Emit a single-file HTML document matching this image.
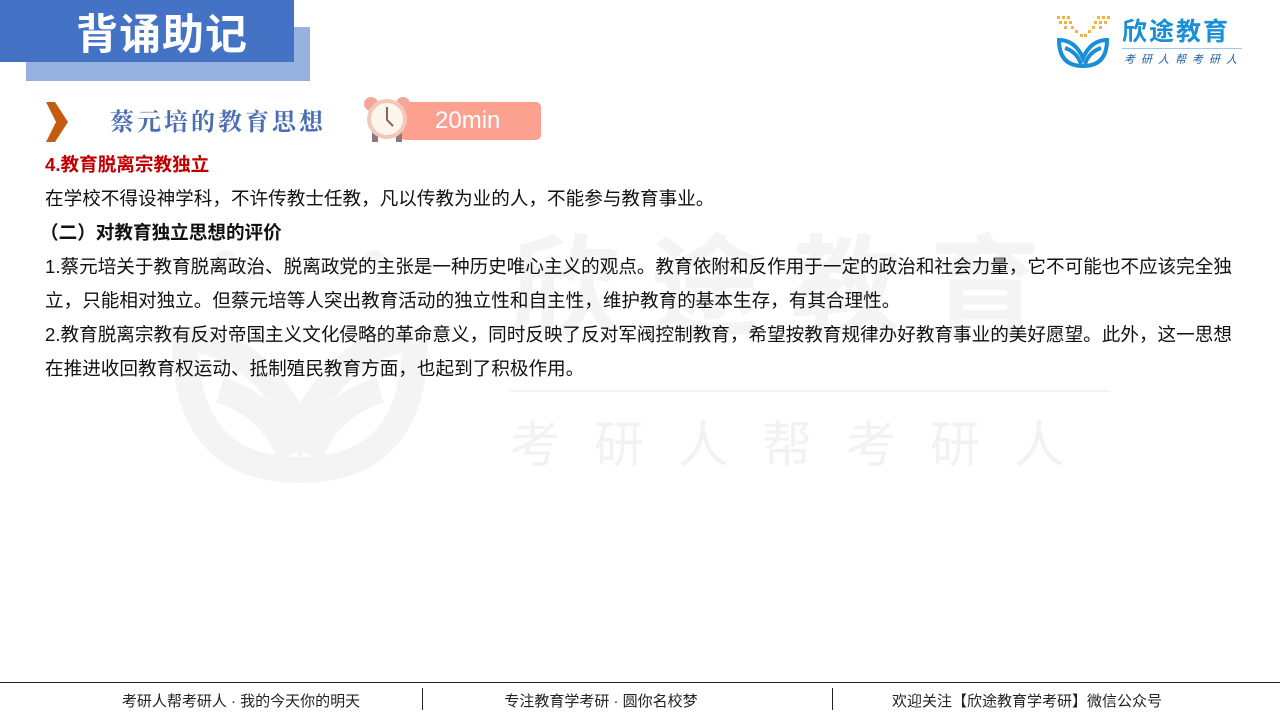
<!DOCTYPE html>
<html><head><meta charset="utf-8"><style>
body{margin:0;width:1280px;height:720px;position:relative;background:#fff;overflow:hidden;font-family:"Liberation Sans","Noto Sans CJK SC",sans-serif}
.a{position:absolute}
.t{font-size:18.6px;color:#111;line-height:34px;left:45px;white-space:nowrap}
</style></head><body>
<svg class="a" style="left:165px;top:230px" width="270" height="260"><g fill="none" stroke="#f4f4f4" stroke-width="26"><path d="M20 110Q20 240 135 240Q250 240 250 110Q180 110 135 200Q90 110 20 110Z"/><path d="M55 160Q105 175 125 225M215 160Q165 175 145 225"/></g><g fill="#f5f5f5"><circle cx="60" cy="30" r="10"/><circle cx="90" cy="40" r="10"/><circle cx="210" cy="30" r="10"/><circle cx="180" cy="40" r="10"/></g></svg>
<div class="a" style="left:26px;top:27px;width:284px;height:54px;background:#97b2de"></div>
<div class="a" style="left:0;top:0;width:294px;height:62px;background:#4472c4"></div>
<div class="a" style="left:76px;top:8px;font-size:42px;font-weight:bold;color:#fff;line-height:54px;letter-spacing:1px">背诵助记</div>
<svg class="a" style="left:46px;top:102px" width="22" height="40"><polygon points="0,0 9,0 22,20 9,40 0,40 10,20" fill="#c55a11"/></svg>
<div class="a" style="left:110px;top:102px;font-size:24px;color:#4a6db4;font-family:'Noto Serif CJK SC',serif;font-weight:bold;letter-spacing:3px">蔡元培的教育思想</div>
<div class="a" style="left:400px;top:102px;width:141px;height:38px;background:#fca090;border-radius:5px;color:#fff;font-size:24px;line-height:38px;text-indent:35px">20min</div>
<svg class="a" style="left:362px;top:94px" width="50" height="48"><circle cx="9" cy="10" r="7" fill="#f5a69a"/><circle cx="41" cy="10" r="7" fill="#f5a69a"/><rect x="10" y="38" width="6" height="10" fill="#8a7a80"/><rect x="34" y="38" width="6" height="10" fill="#8a7a80"/><circle cx="25" cy="25" r="20" fill="#f2c8b8"/><circle cx="25" cy="25" r="16" fill="#fdf6ec"/><path d="M25 13V26L31 32" stroke="#8a6060" stroke-width="2" fill="none"/></svg>
<svg class="a" style="left:1055px;top:14px" width="58" height="56"><g fill="#f6b23c"><rect x="2" y="2" width="3" height="3"/><rect x="7" y="2" width="3" height="3"/><rect x="12" y="2" width="3" height="3"/><rect x="4" y="7" width="3" height="3"/><rect x="9" y="7" width="3" height="3"/><rect x="14" y="7" width="3" height="3"/><rect x="9" y="12" width="3" height="3"/><rect x="16" y="12" width="3" height="3"/><rect x="20" y="16" width="3" height="3"/><rect x="25" y="20" width="3" height="3"/><rect x="52" y="2" width="3" height="3"/><rect x="47" y="2" width="3" height="3"/><rect x="42" y="2" width="3" height="3"/><rect x="49" y="7" width="3" height="3"/><rect x="44" y="7" width="3" height="3"/><rect x="39" y="7" width="3" height="3"/><rect x="44" y="12" width="3" height="3"/><rect x="37" y="12" width="3" height="3"/><rect x="33" y="16" width="3" height="3"/><rect x="29" y="20" width="3" height="3"/></g><g fill="none" stroke="#1a8ed6" stroke-width="4"><path d="M4 26Q4 52 28 52Q52 52 52 26Q36 26 28 44Q20 26 4 26Z"/><path d="M10 34Q22 38 26 50M46 34Q34 38 30 50"/></g></svg>
<div class="a" style="left:1122px;top:12px;font-size:25px;color:#1a8ed6;font-weight:bold;letter-spacing:2px">欣途教育</div>
<div class="a" style="left:1122px;top:48px;width:120px;border-top:1px solid #9cc8ea"></div>
<div class="a" style="left:1124px;top:51px;font-size:11px;color:#1a5ea0;letter-spacing:6px;font-style:italic">考研人帮考研人</div>
<div class="a" style="left:510px;top:230px;color:#f4f4f4;font-size:110px;font-weight:bold;letter-spacing:30px;line-height:120px">欣途教育</div>
<div class="a" style="left:510px;top:390px;width:600px;border-top:2px solid #f3f3f3"></div>
<div class="a" style="left:510px;top:405px;font-size:50px;color:#f2f2f2;letter-spacing:34px">考研人帮考研人</div>
<div class="a t" style="top:148px;color:#c00000;font-weight:bold">4.教育脱离宗教独立</div>
<div class="a t" style="top:182px">在学校不得设神学科，不许传教士任教，凡以传教为业的人，不能参与教育事业。</div>
<div class="a t" style="top:216px;left:40px;font-weight:bold">（二）对教育独立思想的评价</div>
<div class="a t" style="top:250px">1.蔡元培关于教育脱离政治、脱离政党的主张是一种历史唯心主义的观点。教育依附和反作用于一定的政治和社会力量，它不可能也不应该完全独</div>
<div class="a t" style="top:284px">立，只能相对独立。但蔡元培等人突出教育活动的独立性和自主性，维护教育的基本生存，有其合理性。</div>
<div class="a t" style="top:318px">2.教育脱离宗教有反对帝国主义文化侵略的革命意义，同时反映了反对军阀控制教育，希望按教育规律办好教育事业的美好愿望。此外，这一思想</div>
<div class="a t" style="top:352px">在推进收回教育权运动、抵制殖民教育方面，也起到了积极作用。</div>
<div class="a" style="left:0;top:682px;width:1280px;border-top:1px solid #222"></div>
<div class="a" style="left:422px;top:688px;height:22px;border-left:1px solid #222"></div>
<div class="a" style="left:832px;top:688px;height:22px;border-left:1px solid #222"></div>
<div class="a" style="left:0;top:690px;width:482px;text-align:center;font-size:15px;color:#222">考研人帮考研人 · 我的今天你的明天</div>
<div class="a" style="left:400px;top:690px;width:402px;text-align:center;font-size:15px;color:#222">专注教育学考研 · 圆你名校梦</div>
<div class="a" style="left:832px;top:690px;width:390px;text-align:center;font-size:15px;color:#222">欢迎关注【欣途教育学考研】微信公众号</div>
</body></html>
